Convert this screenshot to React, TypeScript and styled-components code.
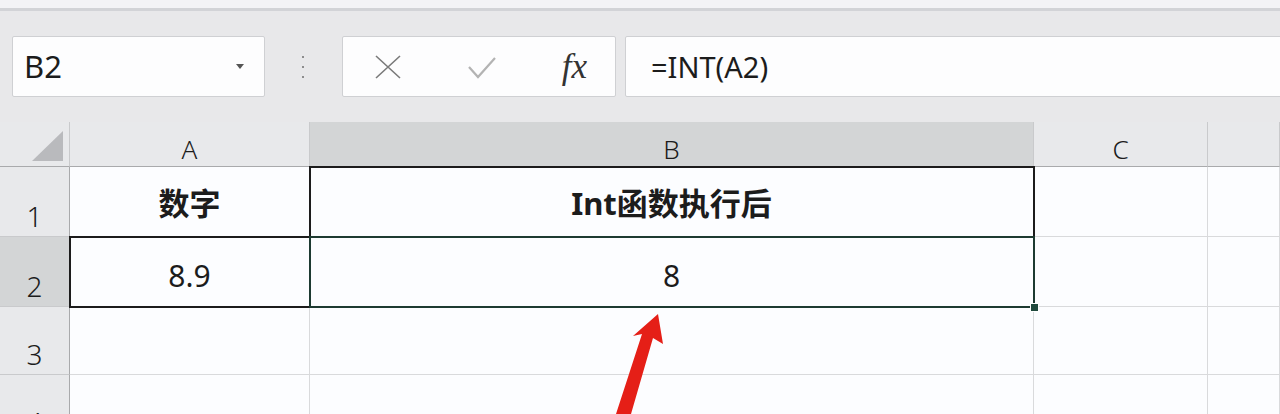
import { Fragment } from 'react';
import styled, { createGlobalStyle } from 'styled-components';

const GlobalStyle = createGlobalStyle`
  html, body {
    margin: 0;
    padding: 0;
    background: #e9e9eb;
  }
  #root {
    width: 1280px;
    height: 414px;
    overflow: hidden;
  }
`;

const FONT = `"Noto Sans", "Noto Sans CJK SC", sans-serif`;

const Page = styled.div`
  position: relative;
  width: 1280px;
  height: 414px;
  overflow: hidden;
  display: flex;
  flex-direction: column;
  font-family: ${FONT};
  color: #1c1c1c;
`;

const TopStrip = styled.div`
  height: 8px;
  flex: none;
  background: #f3f3f6;
  border-bottom: 3px solid #d2d3d7;
`;

const Toolbar = styled.div`
  height: 111px;
  flex: none;
  display: flex;
  align-items: flex-start;
  padding: 25px 0 0 12px;
  box-sizing: border-box;
  background: #e8e8ea;
`;

const Box = styled.div<{ $w: number }>`
  width: ${(p) => p.$w}px;
  height: 61px;
  flex: none;
  box-sizing: border-box;
  background: #fdfdfe;
  border: 1px solid #cfd0d3;
  border-radius: 2px;
  display: flex;
  align-items: center;
`;

const NameText = styled.span`
  flex: 1;
  padding-left: 11px;
  font-size: 31px;
  line-height: 1;
`;

const Caret = styled.span`
  width: 0;
  height: 0;
  margin-right: 20px;
  border-left: 4px solid transparent;
  border-right: 4px solid transparent;
  border-top: 5px solid #555;
`;

const Dots = styled.div`
  width: 77px;
  height: 61px;
  flex: none;
  display: flex;
  flex-direction: column;
  align-items: center;
  justify-content: center;
  gap: 8px;
  padding-right: 2px;
  box-sizing: border-box;
  i {
    width: 2px;
    height: 2px;
    background: #6f6f6f;
    border-radius: 1px;
  }
`;

const Buttons = styled(Box)`
  justify-content: space-between;
  padding: 0 28px 0 31px;
  margin-right: 9px;
`;

const Fx = styled.span`
  font-family: "Liberation Serif", serif;
  font-style: italic;
  font-size: 35px;
  line-height: 1;
  color: #333;
  letter-spacing: 0;
`;

const FormulaText = styled.span`
  padding-left: 25px;
  font-size: 29px;
  line-height: 1;
`;

const Sheet = styled.div`
  flex: none;
  display: grid;
  grid-template-columns: 70px 240px 724px 174px 1fr;
  grid-template-rows: 45px 70px 70px 68px 68px;
  background: #fcfdff;
`;

const ColHead = styled.div<{ $sel?: boolean }>`
  box-sizing: border-box;
  display: flex;
  align-items: flex-end;
  justify-content: center;
  padding-bottom: 4px;
  font-size: 26px;
  line-height: 1;
  font-weight: 300;
  background: ${(p) => (p.$sel ? '#d3d5d6' : '#e8e9eb')};
  border-right: 1px solid #c9cacc;
  border-bottom: 1px solid #a9aaac;
`;

const Corner = styled(ColHead)`
  position: relative;
  &::after {
    content: '';
    position: absolute;
    right: 6px;
    bottom: 5px;
    border-left: 31px solid transparent;
    border-bottom: 30px solid #b9babd;
  }
`;

const RowHead = styled.div<{ $sel?: boolean }>`
  box-sizing: border-box;
  display: flex;
  align-items: flex-end;
  justify-content: center;
  padding-bottom: 6px;
  font-size: 28px;
  line-height: 1;
  font-weight: 300;
  background: ${(p) => (p.$sel ? '#d3d5d6' : '#e8e9eb')};
  border-right: 1px solid #a9aaac;
  border-bottom: 1px solid #c9cacc;
`;

const Cell = styled.div<{ $boxed?: boolean; $bold?: boolean; $active?: boolean }>`
  position: relative;
  box-sizing: border-box;
  display: flex;
  align-items: center;
  justify-content: center;
  padding-top: ${(p) => (p.$bold ? '4px' : '8px')};
  font-size: ${(p) => (p.$bold ? '31px' : '30px')};
  font-weight: ${(p) => (p.$bold ? 700 : 400)};
  line-height: 1;
  border-right: 1px solid #d9dadc;
  border-bottom: 1px solid #d9dadc;
  outline: ${(p) => (p.$active ? '2px solid #1d3a31' : p.$boxed ? '2px solid #1c1c1c' : 'none')};
  outline-offset: -1px;
  z-index: ${(p) => (p.$active ? 2 : p.$boxed ? 1 : 0)};
`;

const Handle = styled.span`
  position: absolute;
  right: -6px;
  bottom: -6px;
  width: 7px;
  height: 7px;
  background: #1f4a3d;
  border: 1px solid #fff;
`;

const Arrow = styled.svg`
  position: absolute;
  left: 0;
  top: 0;
  pointer-events: none;
  z-index: 5;
`;

const cols = ['A', 'B', 'C', ''];

const App = () => {
  const rows: { n: string; a: string; b: string; bold?: boolean }[] = [
    { n: '1', a: '数字', b: 'Int函数执行后', bold: true },
    { n: '2', a: '8.9', b: '8' },
    { n: '3', a: '', b: '' },
    { n: '4', a: '', b: '' },
  ];
  return (
    <Page>
      <GlobalStyle />
      <TopStrip />
      <Toolbar>
        <Box $w={253}>
          <NameText>B2</NameText>
          <Caret />
        </Box>
        <Dots>
          <i />
          <i />
          <i />
        </Dots>
        <Buttons $w={274}>
          <svg width="28" height="26" viewBox="0 0 28 26">
            <path d="M2 2 L26 24 M26 2 L2 24" stroke="#7a7a7a" strokeWidth="1.6" fill="none" />
          </svg>
          <svg width="30" height="24" viewBox="0 0 30 24">
            <path d="M2 12 L11 22 L28 3" stroke="#b3b3b3" strokeWidth="2.2" fill="none" />
          </svg>
          <Fx>fx</Fx>
        </Buttons>
        <Box $w={660}>
          <FormulaText>=INT(A2)</FormulaText>
        </Box>
      </Toolbar>
      <Sheet>
        <Corner />
        {cols.map((c) => (
          <ColHead key={c || 'x'} $sel={c === 'B'}>
            {c}
          </ColHead>
        ))}
        {rows.map((r) => (
          <Fragment key={r.n}>
            <RowHead $sel={r.n === '2'}>{r.n}</RowHead>
            <Cell $boxed={r.n === '2'} $bold={r.bold}>
              {r.a}
            </Cell>
            <Cell $boxed={r.n === '1'} $active={r.n === '2'} $bold={r.bold}>
              {r.b}
              {r.n === '2' && <Handle />}
            </Cell>
            <Cell />
            <Cell />
          </Fragment>
        ))}
      </Sheet>
      <Arrow width="1280" height="414" viewBox="0 0 1280 414">
        <polygon
          points="658,314 663,344 653,338 631,414 616,414 642,334 633,336"
          fill="#e51f17"
        />
      </Arrow>
    </Page>
  );
};

export default App;
